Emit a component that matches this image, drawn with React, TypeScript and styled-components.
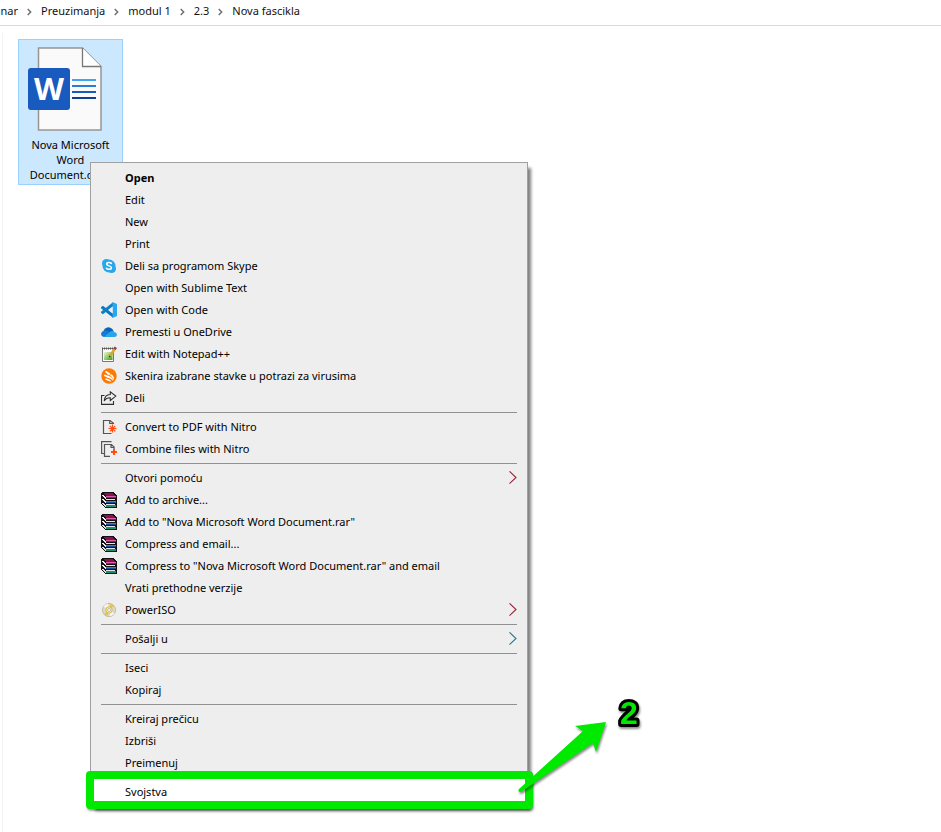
import React from "react";
import styled, { createGlobalStyle, css } from "styled-components";

const GlobalStyle = createGlobalStyle`
  * { box-sizing: border-box; }
  html, body { margin: 0; }
  body {
    background: #fff;
    color: #000;
    font-family: "Noto Sans", sans-serif;
    font-size: 11px;
    line-height: 15px;
    overflow: hidden;
  }
  button { font: inherit; color: inherit; }
  svg { display: block; flex: none; }
`;

const GREEN = "#00ea00";

const Page = styled.div`
  display: flex;
  flex-direction: column;
  min-height: 100vh;
`;

const AddressBar = styled.nav`
  display: flex;
  align-items: center;
  height: 26px;
  padding-bottom: 4px;
  border-bottom: 1px solid #d9d9d9;
`;

const Crumb = styled.a<{ $clipped?: boolean }>`
  display: flex;
  color: #111;
  text-decoration: none;
  white-space: nowrap;
  ${(p) =>
    p.$clipped &&
    css`
      width: 18px;
      justify-content: flex-end;
    `}
`;

const CrumbArrow = styled.svg`
  width: 5px;
  height: 8px;
  margin: 2px 9px 0;
`;

const FolderView = styled.main`
  position: relative;
  flex: 1;
  margin: 7px 0 0 2px;
  padding: 6px 15px;
  border-left: 1px solid #f3f3f3;
`;

const FileTile = styled.button`
  display: flex;
  flex-direction: column;
  align-items: center;
  gap: 6px;
  width: 105px;
  padding: 7px 4px 2px;
  border: 1px solid #99d1ff;
  background: #cce8ff;
`;

const FileName = styled.span`
  text-align: center;
`;

const Menu = styled.div`
  position: absolute;
  top: 129px;
  left: 87px;
  width: 438px;
  padding: 4px 0 3px;
  border: 1px solid #a0a0a0;
  background: #eee;
  box-shadow: 4px 5px 3px -1px rgba(0, 0, 0, 0.5);
`;

const MenuItem = styled.button<{ $strong?: boolean }>`
  position: relative;
  display: flex;
  align-items: center;
  gap: 8px;
  width: 100%;
  height: 22px;
  padding: 0 10px;
  border: 0;
  background: none;
  text-align: left;
  font-weight: ${(p) => (p.$strong ? 700 : 400)};
`;

const IconSlot = styled.span`
  width: 16px;
  height: 16px;
  flex: none;
`;

const Label = styled.span`
  position: relative;
  flex: 1;
  padding-bottom: 1px;
  white-space: nowrap;
`;

const Separator = styled.hr`
  height: 1px;
  margin: 3px 10px;
  border: 0;
  background: #919191;
`;

const Highlight = styled.span`
  position: absolute;
  inset: -10px -6px -6px -5px;
  border: 8px solid ${GREEN};
  border-radius: 4px;
  background: #fff;
  box-shadow: 1px 2px 2px rgba(0, 0, 0, 0.35);
`;

const Pointer = styled.svg`
  position: absolute;
  top: 647px;
  left: 497px;
  width: 150px;
  height: 130px;
  overflow: visible;
  filter: drop-shadow(1px 2px 1px rgba(0, 0, 0, 0.45));
`;

function WordFile() {
  return (
    <svg width="85" height="84" viewBox="0 0 85 84">
      <path d="M10.500 1h44l18.500 18.500V83H10.500z" fill="#fafafa" stroke="#979593" strokeWidth="1.500" />
      <path d="M54.500 1v18.500H73" fill="#fff" stroke="#797774" strokeWidth="1.300" />
      <path d="M44 33h24" stroke="#41a5ee" strokeWidth="2" />
      <path d="M44 39h24" stroke="#2b7cd3" strokeWidth="2" />
      <path d="M44 45h24" stroke="#185abd" strokeWidth="2" />
      <path d="M44 51h24" stroke="#103f91" strokeWidth="2" />
      <rect x="0" y="21" width="42" height="42" rx="3" fill="#185abd" />
      <text x="21" y="53" textAnchor="middle" fill="#fff" fontFamily="Open Sans, sans-serif" fontSize="31" fontWeight="700">W</text>
    </svg>
  );
}

function Skype() {
  return (
    <svg width="16" height="16" viewBox="0 0 16 16">
      <circle cx="5.300" cy="5.300" r="4.300" fill="#28a8ea" />
      <circle cx="10.700" cy="10.700" r="4.300" fill="#28a8ea" />
      <circle cx="8" cy="8" r="6.500" fill="#28a8ea" />
      <path d="M10.400 5.500C9.600 4.300 5.700 4 5.700 6.100c0 2.200 4.700 1.300 4.700 3.600 0 2.200-4.200 2-5 .5" fill="none" stroke="#fff" strokeWidth="1.500" strokeLinecap="round" />
    </svg>
  );
}

function Code() {
  return (
    <svg width="16" height="16" viewBox="0 0 16 16">
      <path d="M0 5.300 1.900 3.800 12 11.500v4.300L0 6.300z" fill="#0879c0" />
      <path d="M0 10.700 1.900 12.200 12 4.500V.2L0 9.700z" fill="#0f7fc8" />
      <path d="M11.500 0 16 1.900v12.200L11.500 16z" fill="#2ba7ee" />
      <path d="M11.600 4.500v7L7.200 8z" fill="#eee" />
    </svg>
  );
}

function OneDrive() {
  return (
    <svg width="16" height="16" viewBox="0 0 16 16">
      <path d="M2.500 7A5 5 0 0 1 11 4.800c1 .9 1.500 2 1.500 3.200L8 10z" fill="#0864b8" />
      <path d="M3 6.800c2-.8 3.500 0 6.500 2L4 13H3C-1 12.700-.7 7.300 3 6.800z" fill="#127bd3" />
      <path d="M8.500 8.200c1.500-1.700 4.200-1.500 5 .1C16.500 8.500 17 13 13.500 13H3z" fill="#28a5ea" />
    </svg>
  );
}

function Notepad() {
  return (
    <svg width="16" height="16" viewBox="0 0 16 16">
      <defs>
        <linearGradient id="pad" x1="0" y1="0" x2="1" y2="1">
          <stop offset="0" stopColor="#f0f8cf" />
          <stop offset="1" stopColor="#3c9c10" />
        </linearGradient>
      </defs>
      <path d="M1.500 2.500h11v13h-11z" fill="#fafafa" stroke="#777" />
      <path d="M3 6h8.500v8H3z" fill="url(#pad)" />
      <path d="M1 2.500h11" stroke="#555" strokeWidth="2" strokeDasharray="1 1" />
      <path d="m9 10 4.700-7" stroke="#dba52e" strokeWidth="2.500" />
      <path d="m13.500 3.300 1.300-2" stroke="#8f3e38" strokeWidth="2.700" />
      <path d="m8 11.500.2-2 1.500 1z" fill="#252525" />
    </svg>
  );
}

function Avast() {
  return (
    <svg width="16" height="16" viewBox="0 0 16 16">
      <circle cx="8" cy="8" r="7.700" fill="#ff7800" />
      <path d="M4.300 4.300c-.3-1 .7-1.500 1.500-1.100l4 2.800-2 1.200z" fill="#fff" />
      <path d="M3 8.100c-.4-1 .4-1.600 1.400-1.300l3.600 1.300c3 1 4.500 3.400 4.100 5-1.400-2-2.800-2.800-4.800-3.100z" fill="#fff" />
      <path d="M4.300 11.600c-.3-.8.300-1.200 1-1.100 1.600.1 2.700.6 3.700 1.500l1.600 1.500c-2 .2-4.500-.8-6.300-1.900z" fill="#fff" />
      <path d="m8.600 7.300 1.900-1c1.800 1.200 2.800 3.200 2.500 6-1-2.300-2.200-3.600-4.400-5z" fill="#fff" />
    </svg>
  );
}

function Share() {
  return (
    <svg width="16" height="16" viewBox="0 0 16 16" fill="none" stroke="#303030" strokeWidth="1.100">
      <path d="M3.500 5.500h-3v8.900h12v-3.500" />
      <path d="M9.300 1.800v2.700C5.700 4.600 3.500 7 3.200 11c1.400-2.400 3.300-3.200 6.100-3.200v2.700l5.500-4.400z" />
    </svg>
  );
}

function ConvertPdf() {
  return (
    <svg width="16" height="16" viewBox="0 0 16 16" fill="none" stroke="#555" strokeWidth="1.200">
      <path d="M12.500 5v-.7L9 1.500H2.500v13h8" />
      <path d="M8.700 1.500v3h3.800" />
      <path d="M11.500 5.500v8M7.500 9.500h8M8.800 6.800l5.500 5.500M14.300 6.800l-5.500 5.500" stroke="#ff4d14" />
    </svg>
  );
}

function CombineFiles() {
  return (
    <svg width="16" height="16" viewBox="0 0 16 16" fill="none" stroke="#555" strokeWidth="1.200">
      <path d="M3 12.500H.6V.6h9.900" />
      <path d="M9 15.400H3.500V3.500h7l2.600 2.600V8M10 3.500v3h3" />
      <path d="M13 8v6M10 11h6" stroke="#ff4d14" strokeWidth="2" />
    </svg>
  );
}

function Archive() {
  return (
    <svg width="16" height="16" viewBox="0 0 16 16" shapeRendering="crispEdges">
      <path d="M1 0h11l4 4v11l-1 1H4l-4-4V1z" fill="#141014" />
      <path d="M2 1h9l3 3H5z" fill="#8d0f4e" />
      <path d="M5 4h10v1H5z" fill="#e05aa9" />
      <path d="M5 5h10v1H5z" fill="#a3135f" />
      <path d="M1 3h1l3 3v1H4L1 4z" fill="#eee" />
      <path d="M5 7h9v1H5z" fill="#e4e4e4" />
      <path d="M5 9h10v1H5z" fill="#1c8fe0" />
      <path d="M5 10h10v1H5z" fill="#164d9c" />
      <path d="M1 7h1l3 3v1H4L1 8z" fill="#eee" />
      <path d="M5 12h9v1H5z" fill="#e4e4e4" />
      <path d="M5 13h10v2H5z" fill="#12936b" />
      <path d="M1 11h1l3 3v1H4l-3-3z" fill="#dedede" />
    </svg>
  );
}

function Disc() {
  return (
    <svg width="16" height="16" viewBox="0 0 16 16">
      <circle cx="8" cy="8" r="6.600" fill="#dddacb" stroke="#b9b3a0" strokeWidth=".8" />
      <path d="M8 8 2.500 4.500A6.300 6.300 0 0 1 7 1.800zM8 8l5.500 3.500A6.300 6.300 0 0 1 9 14.200z" fill="#f7f5ec" />
      <path d="M8 8 9.500 1.800A6.300 6.300 0 0 1 13 4.200zM8 8l-1.500 6.200A6.300 6.300 0 0 1 3 11.800z" fill="#e0c552" />
      <circle cx="8" cy="8" r="3.200" fill="#f4efcc" stroke="#d9b83a" />
      <circle cx="8" cy="8" r="1.500" fill="#fff" stroke="#aaa494" strokeWidth=".7" />
    </svg>
  );
}

function SubmenuArrow({ cool }: { cool?: boolean }) {
  return (
    <svg width="8" height="14" viewBox="0 0 8 14" fill="none" strokeWidth="1.100">
      <path d="m.5.300 6.500 6.200L.5 12.700" stroke={cool ? "#277996" : "#9d2836"} />
    </svg>
  );
}

type Entry = {
  label: string;
  Icon?: () => React.ReactElement;
  strong?: boolean;
  submenu?: "warm" | "cool";
  highlighted?: boolean;
};

const groups: Entry[][] = [
  [
    { label: "Open", strong: true },
    { label: "Edit" },
    { label: "New" },
    { label: "Print" },
    { label: "Deli sa programom Skype", Icon: Skype },
    { label: "Open with Sublime Text" },
    { label: "Open with Code", Icon: Code },
    { label: "Premesti u OneDrive", Icon: OneDrive },
    { label: "Edit with Notepad++", Icon: Notepad },
    { label: "Skenira izabrane stavke u potrazi za virusima", Icon: Avast },
    { label: "Deli", Icon: Share },
  ],
  [
    { label: "Convert to PDF with Nitro", Icon: ConvertPdf },
    { label: "Combine files with Nitro", Icon: CombineFiles },
  ],
  [
    { label: "Otvori pomoću", submenu: "warm" },
    { label: "Add to archive...", Icon: Archive },
    { label: 'Add to "Nova Microsoft Word Document.rar"', Icon: Archive },
    { label: "Compress and email...", Icon: Archive },
    { label: 'Compress to "Nova Microsoft Word Document.rar" and email', Icon: Archive },
    { label: "Vrati prethodne verzije" },
    { label: "PowerISO", Icon: Disc, submenu: "warm" },
  ],
  [{ label: "Pošalji u", submenu: "cool" }],
  [{ label: "Iseci" }, { label: "Kopiraj" }],
  [{ label: "Kreiraj prečicu" }, { label: "Izbriši" }, { label: "Preimenuj" }],
  [{ label: "Svojstva", highlighted: true }],
];

const crumbs = ["unar", "Preuzimanja", "modul 1", "2.3", "Nova fascikla"];

export default function App() {
  return (
    <Page>
      <GlobalStyle />
      <AddressBar>
        {crumbs.map((name, i) => (
          <React.Fragment key={name}>
            {i > 0 && (
              <CrumbArrow viewBox="0 0 5 8">
                <path d="m.7 1 3 3-3 3" fill="none" stroke="#6c6c6c" strokeWidth="1.400" />
              </CrumbArrow>
            )}
            <Crumb href="#" $clipped={i === 0}>{name}</Crumb>
          </React.Fragment>
        ))}
      </AddressBar>
      <FolderView>
        <FileTile>
          <WordFile />
          <FileName>Nova Microsoft Word Document.docx</FileName>
        </FileTile>
        <Menu role="menu">
          {groups.map((group, g) => (
            <React.Fragment key={g}>
              {g > 0 && <Separator />}
              {group.map(({ label, Icon, strong, submenu, highlighted }) => (
                <MenuItem key={label} role="menuitem" $strong={strong}>
                  {highlighted && <Highlight />}
                  <IconSlot>{Icon && <Icon />}</IconSlot>
                  <Label>{label}</Label>
                  {submenu && <SubmenuArrow cool={submenu === "cool"} />}
                </MenuItem>
              ))}
            </React.Fragment>
          ))}
        </Menu>
        <Pointer viewBox="-10 0 150 130">
          <path d="m96 42-31 4 8 5L9 109q-2 3 2 3l72-49 3 9z" fill={GREEN} />
          <text x="119" y="44" textAnchor="middle" fill={GREEN} stroke="#000" strokeWidth="6" strokeLinejoin="round" paintOrder="stroke" fontFamily="Liberation Sans, sans-serif" fontSize="32" fontWeight="700">2</text>
        </Pointer>
      </FolderView>
    </Page>
  );
}
